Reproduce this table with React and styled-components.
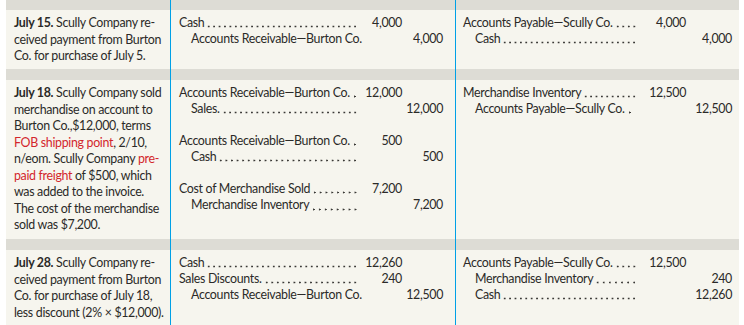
import React from "react";
import styled, { createGlobalStyle } from "styled-components";

const GlobalStyle = createGlobalStyle`
  html, body {
    margin: 0;
    padding: 0;
    background: #ffffff;
  }
  body {
    font-family: Lato, "Liberation Sans", sans-serif;
    color: #2b2a28;
  }
`;

const Sheet = styled.div`
  display: grid;
  grid-template-columns: 164px 285px 284px;
  grid-template-rows: 10px 59px 11px 159px 11px 75px;
  width: 733px;
  margin-left: 6px;
`;

const Band = styled.div`
  background: #dddcd5;
  border-left: ${(p) => (p.$divider ? "1px solid #00a0e6" : "none")};
`;

const Cell = styled.div`
  background: #f6f5ee;
  border-left: ${(p) => (p.$divider ? "1px solid #00a0e6" : "none")};
  padding: 5px 0 0 ${(p) => p.$padLeft || 8}px;
  font-size: 12.4px;
  letter-spacing: -0.32px;
  overflow: hidden;
`;

const Description = styled.div`
  line-height: 16.5px;
  white-space: nowrap;
`;

const Line = styled.span`
  display: block;
`;

const DateLabel = styled.b`
  font-weight: 700;
`;

const Red = styled.span`
  color: #d3262c;
`;

const Group = styled.div`
  & + & {
    margin-top: 16px;
  }
`;

const EntryRow = styled.div`
  display: grid;
  grid-template-columns: ${(p) => p.$cols};
  line-height: 16.1px;
  white-space: nowrap;
`;

const Account = styled.div`
  display: flex;
  align-items: baseline;
  min-width: 0;
  padding-left: ${(p) => (p.$indent ? 12 : 0)}px;
`;

const Label = styled.span`
  flex: none;
`;

const Leader = styled.span`
  flex: 1;
  min-width: 0;
  align-self: stretch;
  margin-left: 2px;
  background-image: radial-gradient(circle, #3a3936 0.8px, transparent 1.2px);
  background-size: 5.4px 3px;
  background-repeat: space no-repeat;
  background-position: left 0 bottom 3px;
`;

const Amount = styled.div`
  text-align: right;
`;

const JOURNAL = [
  {
    text: (
      <>
        <Line><DateLabel>July 15.</DateLabel> Scully Company re-</Line>
        <Line>ceived payment from Burton</Line>
        <Line>Co. for purchase of July 5.</Line>
      </>
    ),
    seller: [
      [
        { name: "Cash", debit: "4,000" },
        { name: "Accounts Receivable—Burton Co.", credit: "4,000", indent: true, noLeader: true },
      ],
    ],
    buyer: [
      [
        { name: "Accounts Payable—Scully Co.", debit: "4,000" },
        { name: "Cash", credit: "4,000", indent: true },
      ],
    ],
  },
  {
    text: (
      <>
        <Line><DateLabel>July 18.</DateLabel> Scully Company sold</Line>
        <Line>merchandise on account to</Line>
        <Line>Burton Co.,$12,000, terms</Line>
        <Line><Red>FOB shipping point</Red>, 2/10,</Line>
        <Line>n/eom. Scully Company <Red>pre-</Red></Line>
        <Line><Red>paid freight</Red> of $500, which</Line>
        <Line>was added to the invoice.</Line>
        <Line>The cost of the merchandise</Line>
        <Line>sold was $7,200.</Line>
      </>
    ),
    seller: [
      [
        { name: "Accounts Receivable—Burton Co.", debit: "12,000" },
        { name: "Sales.", credit: "12,000", indent: true },
      ],
      [
        { name: "Accounts Receivable—Burton Co.", debit: "500" },
        { name: "Cash", credit: "500", indent: true },
      ],
      [
        { name: "Cost of Merchandise Sold", debit: "7,200" },
        { name: "Merchandise Inventory", credit: "7,200", indent: true },
      ],
    ],
    buyer: [
      [
        { name: "Merchandise Inventory", debit: "12,500" },
        { name: "Accounts Payable—Scully Co.", credit: "12,500", indent: true },
      ],
    ],
  },
  {
    text: (
      <>
        <Line><DateLabel>July 28.</DateLabel> Scully Company re-</Line>
        <Line>ceived payment from Burton</Line>
        <Line>Co. for purchase of July 18,</Line>
        <Line>less discount (2% × $12,000).</Line>
      </>
    ),
    seller: [
      [
        { name: "Cash", debit: "12,260" },
        { name: "Sales Discounts.", debit: "240" },
        { name: "Accounts Receivable—Burton Co.", credit: "12,500", indent: true, noLeader: true },
      ],
    ],
    buyer: [
      [
        { name: "Accounts Payable—Scully Co.", debit: "12,500" },
        { name: "Merchandise Inventory", credit: "240", indent: true },
        { name: "Cash", credit: "12,260", indent: true },
      ],
    ],
  },
];

const SELLER_COLS = "179px 44px 41px";
const BUYER_COLS = "174px 49px 46px";

function Entries({ groups, cols }) {
  return groups.map((group, gi) => (
    <Group key={gi}>
      {group.map((line, li) => (
        <EntryRow key={li} $cols={cols}>
          <Account $indent={line.indent}>
            <Label>{line.name}</Label>
            {!line.noLeader && <Leader />}
          </Account>
          <Amount>{line.debit}</Amount>
          <Amount>{line.credit}</Amount>
        </EntryRow>
      ))}
    </Group>
  ));
}

export default function App() {
  return (
    <>
      <GlobalStyle />
      <Sheet>
        {JOURNAL.map((row, i) => (
          <React.Fragment key={i}>
            <Band />
            <Band $divider />
            <Band $divider />
            <Cell>
              <Description>{row.text}</Description>
            </Cell>
            <Cell $divider $padLeft={8}>
              <Entries groups={row.seller} cols={SELLER_COLS} />
            </Cell>
            <Cell $divider $padLeft={7}>
              <Entries groups={row.buyer} cols={BUYER_COLS} />
            </Cell>
          </React.Fragment>
        ))}
      </Sheet>
    </>
  );
}
